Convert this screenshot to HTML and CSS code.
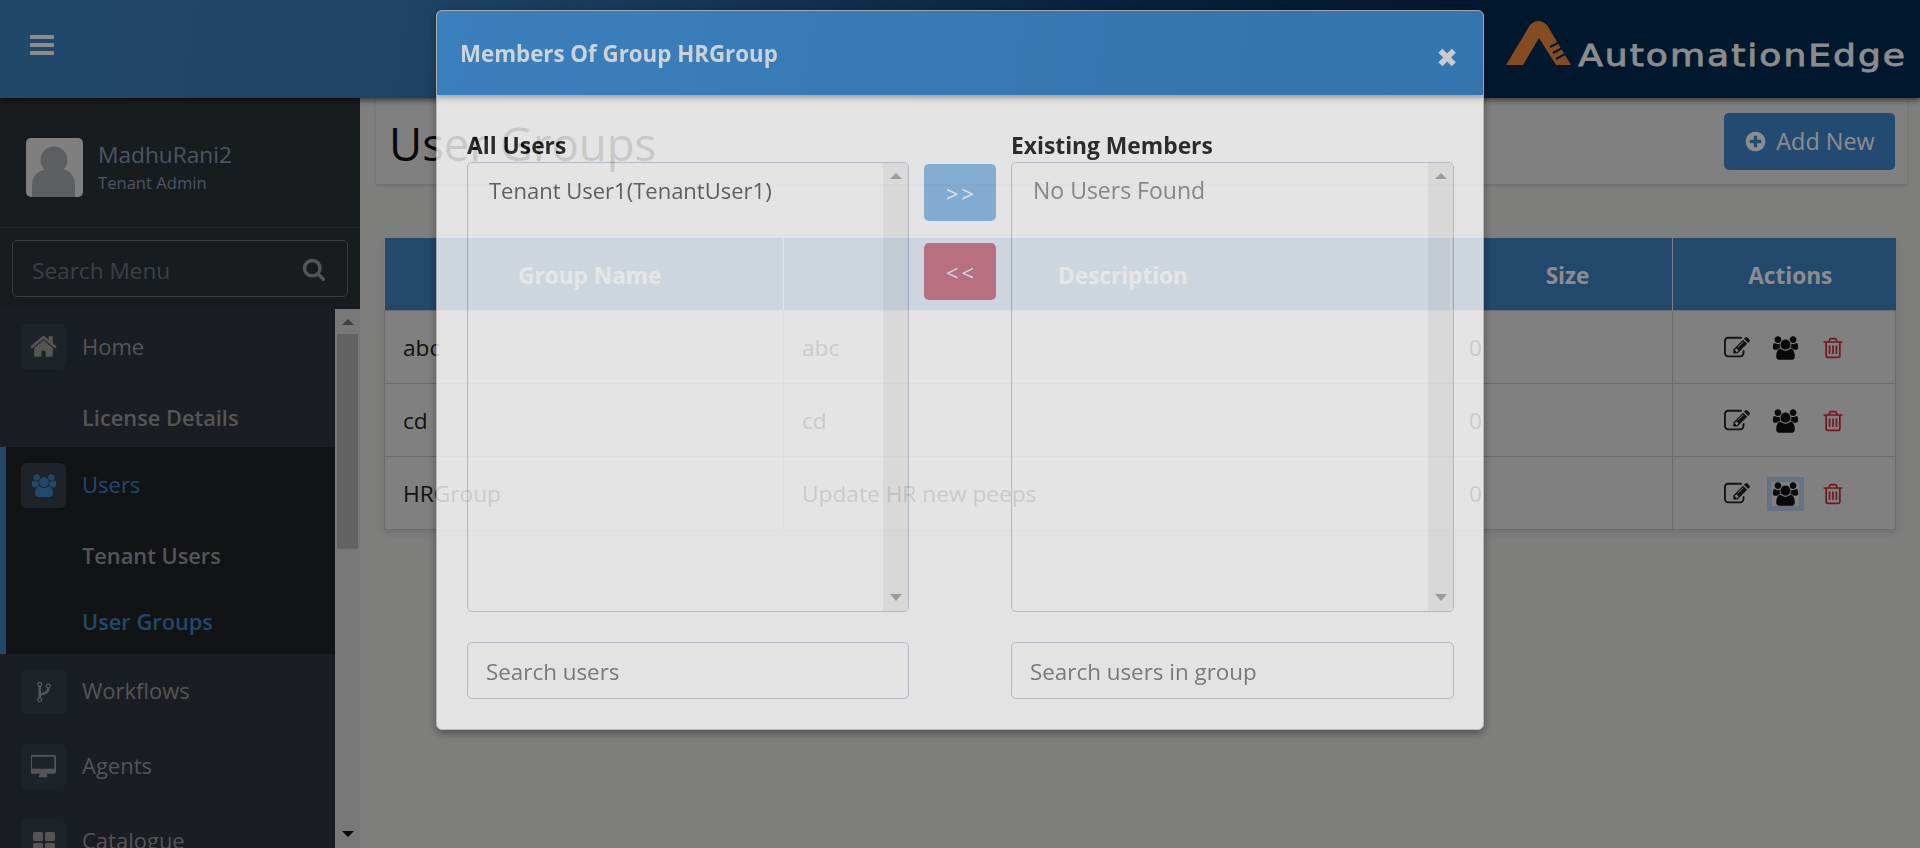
FILE: index.html
```html
<!DOCTYPE html>
<html lang="en">
<head>
<meta charset="utf-8">
<title>User Groups</title>
<link rel="stylesheet" href="styles.css">
</head>
<body>
<svg class="defs" aria-hidden="true">
  <symbol id="i-users" viewBox="0 0 2048 1792"><path d="M657 896q-162 5-265 128h-134q-82 0-138-40.500t-56-118.500q0-353 124-353 6 0 43.500 21t97.500 42.500 119 21.500q67 0 133-23-5 37-5 66 0 139 81 256zm1071 637q0 120-73 189.500t-194 69.500h-874q-121 0-194-69.500t-73-189.500q0-53 3.500-103.500t14-109 26.500-108.500 43-97.500 62-81 85.500-53.500 111.500-20q10 0 43 21.500t73 48 107 48 135 21.500 135-21.500 107-48 73-48 43-21.500q61 0 111.500 20t85.500 53.500 62 81 43 97.500 26.500 108.500 14 109 3.500 103.500zm-1024-1277q0 106-75 181t-181 75-181-75-75-181 75-181 181-75 181 75 75 181zm704 384q0 159-112.500 271.500t-271.500 112.500-271.500-112.500-112.500-271.500 112.500-271.500 271.500-112.500 271.500 112.500 112.500 271.500zm576 225q0 78-56 118.500t-138 40.500h-134q-103-123-265-128 81-117 81-256 0-29-5-66 66 23 133 23 59 0 119-21.500t97.500-42.500 43.500-21q124 0 124 353zm-128-609q0 106-75 181t-181 75-181-75-75-181 75-181 181-75 181 75 75 181z"/></symbol>
  <symbol id="i-edit" viewBox="0 0 1792 1792"><path d="M888 1184l116-116-152-152-116 116v56h96v96h56zm440-720q-16-16-33 1l-350 350q-17 17-1 33t33-1l350-350q17-17 1-33zm80 594v190q0 119-84.500 203.500t-203.500 84.500h-832q-119 0-203.500-84.500t-84.500-203.500v-832q0-119 84.500-203.500t203.500-84.500h832q63 0 117 25 15 7 18 23 3 17-9 29l-49 49q-14 14-32 8-23-6-45-6h-832q-66 0-113 47t-47 113v832q0 66 47 113t113 47h832q66 0 113-47t47-113v-126q0-13 9-22l64-64q15-15 35-7t20 29zm-96-738l288 288-672 672h-288v-288zm444 132l-92 92-288-288 92-92q28-28 68-28t68 28l152 152q28 28 28 68t-28 68z"/></symbol>
  <symbol id="i-trash" viewBox="0 0 1792 1792"><path d="M704 736v576q0 14-9 23t-23 9h-64q-14 0-23-9t-9-23v-576q0-14 9-23t23-9h64q14 0 23 9t9 23zm256 0v576q0 14-9 23t-23 9h-64q-14 0-23-9t-9-23v-576q0-14 9-23t23-9h64q14 0 23 9t9 23zm256 0v576q0 14-9 23t-23 9h-64q-14 0-23-9t-9-23v-576q0-14 9-23t23-9h64q14 0 23 9t9 23zm128 724v-948h-896v948q0 22 7 40.500t14.500 27 10.500 8.500h832q3 0 10.500-8.500t14.500-27 7-40.500zm-672-1076h448l-48-117q-7-9-17-11h-317q-10 2-17 11zm928 32v64q0 14-9 23t-23 9h-96v948q0 83-47 143.500t-113 60.500h-832q-66 0-113-57.500t-47-139.500v-955h-96q-14 0-23-9t-9-23v-64q0-14 9-23t23-9h309l70-167q15-37 54-63t79-26h320q40 0 79 26t54 63l70 167h309q14 0 23 9t9 23z"/></symbol>
</svg>

<header class="topbar">
  <div class="burger"><span></span><span></span><span></span></div>
  <div class="logo">
    <svg class="logo-mark" viewBox="0 0 66 46" aria-hidden="true">
      <path fill="#f58a3c" d="M0 45 L24 5 Q32 -3 41 5 L65 45 L50 45 L33 18 L17 45 Z"/>
      <path fill="none" stroke="#002c54" stroke-width="2" d="M44 27 L54 22 M47 33 L58 27 M50 39 L61 33"/>
    </svg>
    <span class="logo-text">AutomationEdge</span>
  </div>
</header>

<div class="shell">
  <aside class="sidebar">
    <div class="user-panel">
      <svg class="avatar" viewBox="0 0 57 59" aria-hidden="true">
        <rect width="57" height="59" rx="5" fill="#e8e8e8"/>
        <circle cx="28" cy="22" r="13.500" fill="#a8abb0"/>
        <path fill="#a8abb0" d="M6 59 V48 Q6 34 20 31 Q28 37 37 31 Q49 34 49 48 V59 Z"/>
      </svg>
      <div class="user-text">
        <div class="user-name">MadhuRani2</div>
        <div class="user-role">Tenant Admin</div>
      </div>
    </div>
    <div class="menu-search">
      <span class="menu-search-text">Search Menu</span>
      <svg class="ico-search" viewBox="0 0 1792 1792" aria-hidden="true"><path d="M1216 832q0-185-131.500-316.500t-316.500-131.500-316.500 131.500-131.500 316.500 131.500 316.500 316.500 131.500 316.500-131.500 131.500-316.500zm512 832q0 52-38 90t-90 38q-54 0-90-38l-343-342q-179 124-399 124-143 0-273.500-55.500t-225-150-150-225-55.500-273.500 55.500-273.500 150-225 225-150 273.500-55.500 273.500 55.500 225 150 150 225 55.500 273.500q0 220-124 399l343 343q37 37 37 90z"/></svg>
    </div>
    <div class="nav-wrap">
      <nav class="nav">
        <div class="nav-item home">
          <span class="nav-ico"><svg viewBox="0 0 1792 1792" class="ni-home"><path d="M1472 992v480q0 26-19 45t-45 19h-384v-384h-256v384h-384q-26 0-45-19t-19-45v-480q0-1 .5-3t.5-3l575-474 575 474q1 2 1 6zm223-69l-62 74q-8 9-21 11h-3q-13 0-21-7l-692-577-692 577q-12 8-24 7-13-2-21-11l-62-74q-8-10-7-23.500t11-21.500l719-599q32-26 76-26t76 26l244 204v-195q0-14 9-23t23-9h192q14 0 23 9t9 23v408l219 182q10 8 11 21.500t-7 23.500z"/></svg></span>
          <span class="nav-label">Home</span>
        </div>
        <div class="sub-item first">License Details</div>
        <div class="nav-group">
          <div class="nav-item active">
            <span class="nav-ico"><svg viewBox="0 0 2048 1792" class="ni-users"><use href="#i-users"/></svg></span>
            <span class="nav-label">Users</span>
          </div>
          <div class="sub-item tenant">Tenant Users</div>
          <div class="sub-item current">User Groups</div>
        </div>
        <div class="nav-item">
          <span class="nav-ico"><svg viewBox="0 0 1024 1792" class="ni-fork"><path d="M288 1472q0-40-28-68t-68-28-68 28-28 68 28 68 68 28 68-28 28-68zm0-1152q0-40-28-68t-68-28-68 28-28 68 28 68 68 28 68-28 28-68zm640 128q0-40-28-68t-68-28-68 28-28 68 28 68 68 28 68-28 28-68zm96 0q0 52-26 96.500t-70 69.500q-2 287-226 414-67 38-203 81-128 40-169.500 71t-41.500 100v26q44 25 70 69.500t26 96.500q0 80-56 136t-136 56-136-56-56-136q0-52 26-96.500t70-69.500v-820q-44-25-70-69.500t-26-96.500q0-80 56-136t136-56 136 56 56 136q0 52-26 96.500t-70 69.500v497q54-26 154-57 55-17 87.500-29.500t70.500-31 59-39.500 40.500-51 28-69.500 8.500-91.500q-44-25-70-69.500t-26-96.500q0-80 56-136t136-56 136 56 56 136z"/></svg></span>
          <span class="nav-label">Workflows</span>
        </div>
        <div class="nav-item">
          <span class="nav-ico"><svg viewBox="0 0 1920 1792" class="ni-desk"><path d="M1728 992v-832q0-13-9.500-22.500t-22.500-9.500h-1600q-13 0-22.500 9.500t-9.500 22.500v832q0 13 9.500 22.500t22.500 9.500h1600q13 0 22.500-9.500t9.500-22.500zm128-832v1088q0 66-47 113t-113 47h-544q0 37 16 77.500t32 71 16 43.500q0 26-19 45t-45 19h-512q-26 0-45-19t-19-45q0-14 16-44t32-70 16-78h-544q-66 0-113-47t-47-113v-1088q0-66 47-113t113-47h1632q66 0 113 47t47 113z"/></svg></span>
          <span class="nav-label">Agents</span>
        </div>
        <div class="nav-item">
          <span class="nav-ico"><svg viewBox="0 0 24 24" class="ni-grid"><rect x="1" y="2" width="10" height="9" rx="1.500"/><rect x="13" y="2" width="10" height="9" rx="1.500"/><rect x="1" y="13" width="10" height="9" rx="1.500"/><rect x="13" y="13" width="10" height="9" rx="1.500"/></svg></span>
          <span class="nav-label">Catalogue</span>
        </div>
      </nav>
      <div class="side-scroll">
        <span class="arrow-up"></span>
        <span class="thumb"></span>
        <span class="arrow-down"></span>
      </div>
    </div>
  </aside>

  <main class="main">
    <div class="title-box">
      <h1 class="title">User Groups</h1>
      <button class="btn-add" type="button">
        <svg viewBox="0 0 1792 1792" class="ico-plus" aria-hidden="true"><path d="M1344 960v-128q0-26-19-45t-45-19h-256v-256q0-26-19-45t-45-19h-128q-26 0-45 19t-19 45v256h-256q-26 0-45 19t-19 45v128q0 26 19 45t45 19h256v256q0 26 19 45t45 19h128q26 0 45-19t19-45v-256h256q26 0 45-19t19-45zm320-64q0 209-103 385.500t-279.500 279.500-385.500 103-385.500-103-279.500-279.500-103-385.500 103-385.500 279.500-279.500 385.500-103 385.500 103 279.500 279.500 103 385.500z"/></svg>
        Add New
      </button>
    </div>
    <table class="grid">
      <colgroup><col class="c1"><col class="c2"><col class="c3"><col class="c4"></colgroup>
      <thead>
        <tr><th>Group Name</th><th>Description</th><th>Size</th><th>Actions</th></tr>
      </thead>
      <tbody>
        <tr>
          <td>abc</td><td>abc</td><td>0</td>
          <td class="acts">
            <svg class="a-edit"><use href="#i-edit"/></svg><svg class="a-users"><use href="#i-users"/></svg><svg class="a-trash"><use href="#i-trash"/></svg>
          </td>
        </tr>
        <tr>
          <td>cd</td><td>cd</td><td>0</td>
          <td class="acts">
            <svg class="a-edit"><use href="#i-edit"/></svg><svg class="a-users"><use href="#i-users"/></svg><svg class="a-trash"><use href="#i-trash"/></svg>
          </td>
        </tr>
        <tr>
          <td>HRGroup</td><td>Update HR new peeps</td><td>0</td>
          <td class="acts">
            <svg class="a-edit"><use href="#i-edit"/></svg><svg class="a-users focused"><use href="#i-users"/></svg><svg class="a-trash"><use href="#i-trash"/></svg>
          </td>
        </tr>
      </tbody>
    </table>
  </main>
</div>

<div class="backdrop"></div>

<div class="modal-layer">
  <section class="modal">
    <div class="modal-head">
      <h2 class="modal-title">Members Of Group HRGroup</h2>
      <span class="modal-close">&#10006;</span>
    </div>
    <div class="modal-body">
      <div class="col">
        <div class="col-label">All Users</div>
        <div class="listbox">
          <div class="list-items"><div class="list-item dark">Tenant User1(TenantUser1)</div></div>
          <div class="list-scroll"><span class="mini-up"></span><span class="mini-down"></span></div>
        </div>
      </div>
      <div class="mid">
        <button class="mv mv-add" type="button">&gt;&gt;</button>
        <button class="mv mv-del" type="button">&lt;&lt;</button>
      </div>
      <div class="col">
        <div class="col-label">Existing Members</div>
        <div class="listbox">
          <div class="list-items"><div class="list-item empty">No Users Found</div></div>
          <div class="list-scroll"><span class="mini-up"></span><span class="mini-down"></span></div>
        </div>
      </div>
      <input class="search" type="text" placeholder="Search users">
      <div></div>
      <input class="search" type="text" placeholder="Search users in group">
    </div>
  </section>
</div>
</body>
</html>
```
FILE: styles.css
```css
* { box-sizing: border-box; }
html, body { height: 100%; }
body {
  margin: 0;
  height: 848px;
  overflow: hidden;
  background: #e5e6e4;
  font-family: "Open Sans", "Noto Sans", sans-serif;
  font-size: 21px;
  color: #222;
  display: flex;
  flex-direction: column;
}
.defs { display: none; }

/* top bar */
.topbar {
  height: 98px;
  flex: none;
  display: flex;
  align-items: center;
  justify-content: space-between;
  padding: 0 13px 8px 30px;
  background: linear-gradient(100deg, #3e83c4 0%, #3a7cb8 20%, #0a3a68 60%, #002c54 78%, #002c54 100%);
  box-shadow: 0 2px 6px rgba(0,0,0,.6);
  position: relative;
  z-index: 2;
}
.burger { width: 24px; display: flex; flex-direction: column; gap: 4px; }
.burger span { height: 4px; border-radius: 1px; background: #fff; }
.logo { display: flex; align-items: flex-end; margin-top: -4px; }
.logo-mark { width: 66px; height: 46px; }
.logo-text {
  margin: 0 0 -4px 61px;
  font-family: "DejaVu Sans", sans-serif;
  font-size: 30px;
  line-height: 28px;
  letter-spacing: 1.7px;
  color: #fff;
  -webkit-text-stroke: .8px #fff;
  transform: scaleX(1.2);
  transform-origin: right center;
}

.shell { flex: 1; display: flex; min-height: 0; }

/* sidebar */
.sidebar {
  width: 360px;
  flex: none;
  background: #2f333a;
  display: flex;
  flex-direction: column;
  min-height: 0;
}
.user-panel {
  height: 130px;
  flex: none;
  display: flex;
  align-items: center;
  gap: 15px;
  padding: 10px 0 0 26px;
  border-bottom: 1px solid #3a3e46;
}
.avatar { width: 57px; height: 59px; flex: none; }
.user-text { padding-top: 2px; }
.user-name { font-size: 22.7px; line-height: 28px; color: #8a9bb4; }
.user-role { font-size: 16.6px; line-height: 28px; color: #8a9bb4; }
.menu-search {
  flex: none;
  height: 57px;
  margin: 12px 12px 12px;
  border: 1px solid #6b6f76;
  border-radius: 5px;
  display: flex;
  align-items: center;
  justify-content: space-between;
  padding: 3px 21px 0 19px;
  font-size: 22.6px;
}
.menu-search-text { color: #70747a; }
.ico-search { width: 24px; height: 24px; fill: #9b9b9b; margin-top: -3px; }
.nav-wrap { flex: 1; min-height: 0; display: flex; }
.nav { flex: 1; min-width: 0; background: #31353d; overflow: hidden; }
.nav-item {
  height: 75px;
  padding: 15px 0 15px 21px;
  display: flex;
  align-items: center;
  gap: 16px;
  color: #9b9b9b;
  font-size: 22px;
}
.nav-label { margin-top: -4px; }
.home .nav-label { margin-top: -1px; }
.nav-ico {
  width: 45px;
  height: 45px;
  flex: none;
  border-radius: 6px;
  background: #38404b;
  display: flex;
  align-items: center;
  justify-content: center;
  fill: #9b9b9b;
}
.ni-home { width: 29px; height: 29px; }
.ni-users { width: 26px; height: 23px; }
.ni-fork { width: 14px; height: 24px; }
.ni-desk { width: 26px; height: 24px; }
.ni-grid { width: 24px; height: 24px; }
.sub-item {
  height: 65px;
  padding-left: 82px;
  display: flex;
  align-items: center;
  font-weight: 600;
  font-size: 21.8px;
  color: #9b9b9b;
}
.sub-item.first { height: 63px; padding-top: 3px; }
.sub-item.tenant { padding-bottom: 3px; }
.sub-item.current { padding-bottom: 1px; }
.nav-group { background: #212326; border-left: 6px solid #3e83c4; }
.nav-group .nav-item { padding-left: 15px; height: 77px; }
.nav-group .sub-item { padding-left: 76px; }
.nav-item.active { color: #3e83c4; }
.nav-item.active .nav-ico { fill: #3e83c4; }
.sub-item.current { color: #3e83c4; }
.side-scroll {
  width: 25px;
  flex: none;
  background: #dadada;
  display: flex;
  flex-direction: column;
  align-items: center;
  padding: 10px 0 11px;
}
.thumb { width: 21px; height: 215px; margin-top: 9px; background: #b4b4b4; }
.arrow-up { width: 0; height: 0; border: 6px solid transparent; border-top: 0; border-bottom: 6px solid #777; }
.arrow-down {
  width: 0; height: 0; margin-top: auto;
  border: 6px solid transparent; border-bottom: 0; border-top: 6px solid #111;
}

/* main */
.main { flex: 1; min-width: 0; padding: 0 25px 0 16px; }
.title-box {
  height: 87px;
  width: 1531px;
  display: flex;
  align-items: center;
  justify-content: space-between;
  padding: 0 12px 0 13px;
  background: #e8e9e7;
  border-bottom: 1px solid #d0d0d0;
  box-shadow: 0 1px 3px rgba(0,0,0,.12);
}
.title { margin: 5px 0 0; font-size: 45.5px; font-weight: 400; color: #111; line-height: 1; }
.btn-add {
  width: 171px;
  height: 57px;
  border: 0;
  border-radius: 5px;
  background: #4187cc;
  color: #fff;
  font: inherit;
  font-size: 23.4px;
  display: flex;
  align-items: center;
  justify-content: center;
  gap: 9px;
}
.ico-plus { width: 23px; height: 23px; fill: #fff; }

.grid {
  margin: 53px 0 0 8px;
  width: 1511px;
  table-layout: fixed;
  border-collapse: collapse;
  box-shadow: 0 3px 8px rgba(0,0,0,.1);
}
.c1 { width: 399px; }
.c2 { width: 667px; }
.c3 { width: 222px; }
.c4 { width: 223px; }
.grid th {
  height: 72px;
  padding: 4px 0 0 12px;
  background: #3e83c4;
  color: #fff;
  font-weight: 700;
  font-size: 22.6px;
  text-align: center;
  border-left: 1px solid #dbe6f0;
}
.grid th:first-child { border-left: 0; }
.grid td {
  height: 73px;
  padding: 2px 18px 0;
  background: #e9e9e9;
  border: 1px solid #c4c4c4;
  color: #222;
  font-size: 22.7px;
}
.grid td.acts { text-align: center; white-space: nowrap; line-height: 0; padding-left: 19px; }
.acts svg { display: inline-block; vertical-align: middle; }
.a-edit { width: 26px; height: 26px; fill: #222; margin-right: 22px; }
.a-users { width: 27px; height: 24px; fill: #111; margin-right: 22px; }
.a-trash { width: 24px; height: 24px; fill: #d6283a; }
.focused { outline: 5px solid #b8d0e8; background: #e9e9e9; }

/* overlay */
.backdrop { position: fixed; inset: 0; background: rgba(0,0,0,.45); z-index: 10; }
.modal-layer {
  position: fixed;
  inset: 0;
  z-index: 11;
  display: flex;
  justify-content: center;
  align-items: flex-start;
  padding-top: 10px;
}
.modal {
  width: 1048px;
  height: 720px;
  background: #fff;
  border-radius: 6px;
  opacity: .775;
  overflow: hidden;
  box-shadow: 0 3px 9px rgba(0,0,0,.5);
  border: 1px solid #ccc;
}
.modal-head {
  height: 84px;
  display: flex;
  align-items: center;
  justify-content: space-between;
  padding: 0 25px 0 23px;
  background: linear-gradient(100deg, #4492d6, #4390d4);
  color: #fff;
  box-shadow: 0 2px 6px rgba(0,0,0,.25);
  position: relative;
}
.modal-title { margin: 0; font-size: 22.3px; font-weight: 700; }
.modal-close { font-size: 26px; font-weight: 700; margin-top: 10px; line-height: 1; font-family: "DejaVu Sans", sans-serif; }
.modal-body {
  padding: 34px 29px 0 30px;
  display: grid;
  grid-template-columns: 442px 102px 443px;
  row-gap: 30px;
}
.col-label { height: 33px; font-weight: 700; font-size: 22.8px; line-height: 33px; color: #111; }
.listbox {
  height: 450px;
  border: 1px solid #c0c8d2;
  border-radius: 5px;
  display: flex;
  overflow: hidden;
}
.list-items { flex: 1; padding: 13px 18px 13px 21px; }
.list-item { line-height: 29px; color: #888; font-size: 23px; }
.list-item.dark { color: #555; font-size: 22px; }
.list-scroll {
  width: 25px;
  background: #f1f1f1;
  display: flex;
  flex-direction: column;
  align-items: center;
  justify-content: space-between;
  padding: 10px 0;
}
.mini-up { width: 0; height: 0; border: 6px solid transparent; border-top: 0; border-bottom: 6px solid #a3a3a3; }
.mini-down { width: 0; height: 0; border: 6px solid transparent; border-bottom: 0; border-top: 7px solid #a3a3a3; }
.mid { display: flex; flex-direction: column; align-items: center; gap: 22px; padding-top: 35px; }
.mv {
  width: 72px;
  height: 57px;
  border: 0;
  border-radius: 5px;
  color: #fff;
  font: inherit;
  font-size: 22px;
  letter-spacing: 3px;
  padding: 0 0 0 3px;
}
.mv-add { background: #83b7ea; }
.mv-del { background: #e47b85; }
.search {
  height: 57px;
  width: 100%;
  border: 1px solid #c0c8d2;
  border-radius: 5px;
  background: #fff;
  padding: 2px 18px 0;
  font: inherit;
  font-size: 22.4px;
  color: #555;
}
.search::placeholder { color: #777; opacity: 1; }
```
